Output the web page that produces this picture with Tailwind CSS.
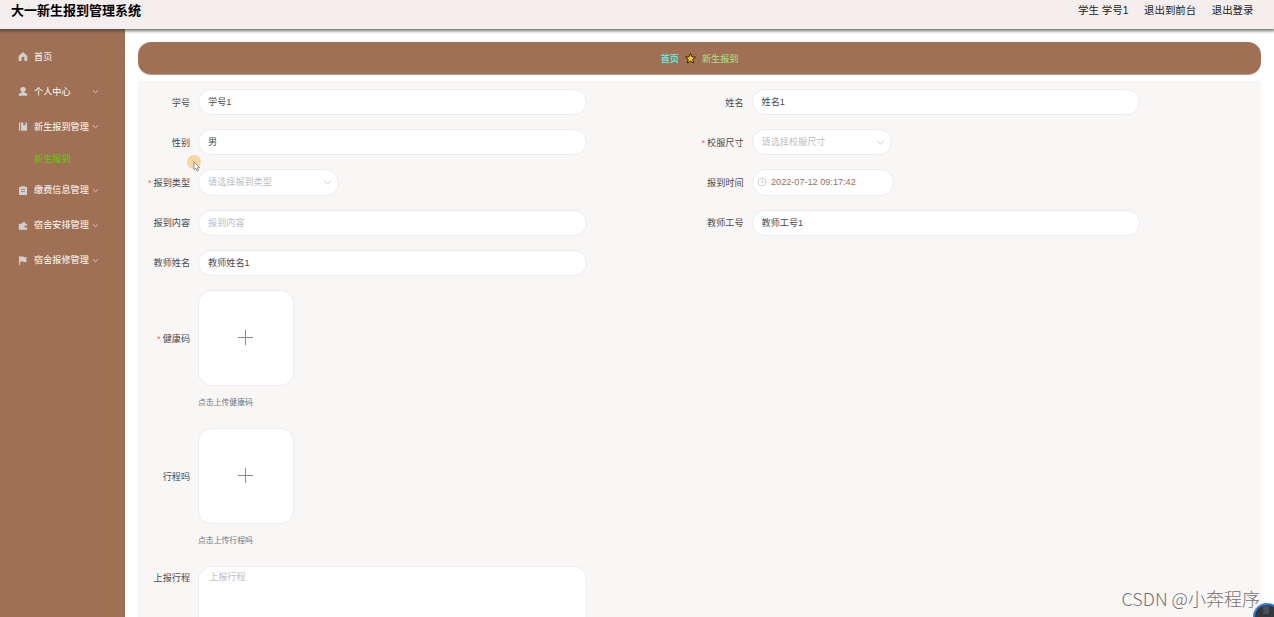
<!DOCTYPE html>
<html lang="zh">
<head>
<meta charset="utf-8">
<title>大一新生报到管理系统</title>
<script src="https://cdn.jsdelivr.net/npm/@tailwindcss/browser@4"></script>
</head>
<body class="relative flex h-[617px] w-[1274px] flex-col overflow-hidden bg-white font-['Liberation_Sans','Noto_Sans_CJK_SC',sans-serif] text-[9.15px] leading-none text-[#4a4a4e]">
<header class="relative z-10 flex h-[29px] shrink-0 items-start justify-between bg-[#f4eeee] pl-[11px] pr-[20.5px] pt-[3px] text-black shadow-[0_1px_3px_1px_rgba(50,55,45,0.7)]">
  <h1 class="text-[13px] font-bold leading-[15px]">大一新生报到管理系统</h1>
  <nav class="flex gap-[15.5px] text-[10.45px] leading-[15px] text-[#222]"><span>学生 学号1</span><span>退出到前台</span><span>退出登录</span></nav>
</header>
<div class="flex min-h-0 flex-1">
  <aside class="flex w-[125px] shrink-0 flex-col bg-[#a07054] pt-[10px] text-white">
    <a class="flex h-[35px] shrink-0 items-center pl-[18px]"><svg class="mr-[6px] size-[10px] fill-[#d0cfd3]" viewBox="0 0 10 10"><path d="M5 .1 9.3 3.9V8.9H6.4V6.1a1.4 1.4 0 0 0-2.8 0V8.9H.7V3.9Z"/></svg><span class="pt-[2px]">首页</span></a>
    <a class="flex h-[35px] shrink-0 items-center pl-[18px]"><svg class="mr-[6px] size-[10px] fill-[#d0cfd3]" viewBox="0 0 10 10"><path d="M5 .2a2.3 2.3 0 0 1 1.3 4.4V5.6L9.2 6.7V8.8H.8V6.7L3.7 5.6V4.6A2.3 2.3 0 0 1 5 .2Z"/></svg><span class="w-[58px] pt-[2px]">个人中心</span><svg class="size-[7px] fill-none stroke-[#e8dcd5]" viewBox="0 0 7 7"><path d="m.9 2.3 2.6 2.4 2.6-2.4" stroke-width=".8"/></svg></a>
    <a class="flex h-[35px] shrink-0 items-center pl-[18px]"><svg class="mr-[6px] size-[10px] fill-[#d0cfd3]" viewBox="0 0 10 10"><path d="M1 .4H2.2V8.8H1ZM3.1 .4H5.3V3.6L6.4 2.7 7.5 3.6V.4H9V8.8H3.1Z"/></svg><span class="w-[58px] pt-[2px]">新生报到管理</span><svg class="size-[7px] fill-none stroke-[#e8dcd5]" viewBox="0 0 7 7"><path d="m.9 2.3 2.6 2.4 2.6-2.4" stroke-width=".8"/></svg></a>
    <a class="flex h-[29px] shrink-0 items-center pl-[34px] pt-[2px] text-[#67c806]">新生报到</a>
    <a class="flex h-[35px] shrink-0 items-center pl-[18px]"><svg class="mr-[6px] size-[10px] fill-[#d0cfd3]" viewBox="0 0 10 10"><path fill-rule="evenodd" d="M1 .9H3V.2H7V.9H9V8.9H1ZM3 3.2V4H7V3.2ZM3 5.3V6.1H7V5.3Z"/></svg><span class="w-[58px] pt-px">缴费信息管理</span><svg class="size-[7px] fill-none stroke-[#e8dcd5]" viewBox="0 0 7 7"><path d="m.9 2.3 2.6 2.4 2.6-2.4" stroke-width=".8"/></svg></a>
    <a class="flex h-[35px] shrink-0 items-center pl-[18px]"><svg class="mr-[6px] size-[10px] fill-[#d0cfd3]" viewBox="0 0 10 10"><path d="M.8 2.9 3.8 2.4 6.3.4 7.4 2.8H9.2V4.6H7.4A.9.9 0 0 0 7.4 6.4H9.2V8.8H.8Z"/></svg><span class="w-[58px] pt-px">宿舍安排管理</span><svg class="size-[7px] fill-none stroke-[#e8dcd5]" viewBox="0 0 7 7"><path d="m.9 2.3 2.6 2.4 2.6-2.4" stroke-width=".8"/></svg></a>
    <a class="flex h-[35px] shrink-0 items-center pl-[18px]"><svg class="mr-[6px] size-[10px] fill-[#d0cfd3]" viewBox="0 0 10 10"><path d="M1 .2H2.1V.6H5.6V1.3H9.2L7.9 3.7 9.2 6H5.3V5.4H2.1V9.2H1Z"/></svg><span class="w-[58px] pt-px">宿舍报修管理</span><svg class="size-[7px] fill-none stroke-[#e8dcd5]" viewBox="0 0 7 7"><path d="m.9 2.3 2.6 2.4 2.6-2.4" stroke-width=".8"/></svg></a>
  </aside>
  <main class="flex min-w-0 flex-1 flex-col pl-[13px] pr-[13px] pt-[13px]">
    <div class="flex h-[33px] w-[1123px] shrink-0 items-center justify-center rounded-[13px] border-b border-[#b89a8e] bg-[#a07054]">
      <span class="pt-[3px] font-bold text-[#62e3dc]">首页</span>
      <svg class="mx-[6px] size-[11px] fill-[#ffc61a] stroke-[#201505]" viewBox="0 0 11 11"><path stroke-width=".9" stroke-linejoin="round" d="m5.5.6 1.4 3.1 3.5.4-2.6 2.3.8 3.5-3.1-1.7-3.1 1.7.8-3.5L.6 4.1l3.5-.4Z"/></svg>
      <span class="pt-[3px] text-[#a6e58b]">新生报到</span>
    </div>
    <form class="mt-[6px] grid min-h-0 flex-1 grid-cols-[553.5px_554px] content-start gap-y-[14px] bg-[#f9f6f6] pl-[7px] pt-[8px]">
      <div class="flex h-[26.2px] items-center"><label class="w-[45px] pt-[2px] text-right">学号</label><div class="ml-[8px] flex h-full w-[389px] items-center rounded-full border border-[#eeebed] bg-white pl-[9px] pt-px">学号1</div></div>
      <div class="flex h-[26.2px] items-center"><label class="w-[45px] pt-[2px] text-right">姓名</label><div class="ml-[8px] flex h-full w-[388.4px] items-center rounded-full border border-[#eeebed] bg-white pl-[9px] pt-px">姓名1</div></div>
      <div class="flex h-[26.2px] items-center"><label class="w-[45px] pt-[2px] text-right">性别</label><div class="ml-[8px] flex h-full w-[389px] items-center rounded-full border border-[#eeebed] bg-white pl-[9px] pt-px">男</div></div>
      <div class="flex h-[26.2px] items-center"><label class="flex w-[45px] justify-end whitespace-nowrap pt-[2px]"><span class="mr-[2px] text-[#f56c6c]">*</span>校服尺寸</label><div class="ml-[8px] flex h-full w-[140.4px] items-center justify-between rounded-full border border-[#eeebed] bg-white pl-[9px] pr-[6px] text-[#bcbec4]">请选择校服尺寸<svg class="size-[9px] fill-none stroke-[#b8bbc2]" viewBox="0 0 9 9"><path d="m1.2 2.8 3.3 3.4 3.3-3.4" stroke-width=".8"/></svg></div></div>
      <div class="flex h-[26.2px] items-center"><label class="flex w-[45px] justify-end whitespace-nowrap pt-[2px]"><span class="mr-[2px] text-[#f56c6c]">*</span>报到类型</label><div class="ml-[8px] flex h-full w-[141px] items-center justify-between rounded-full border border-[#eeebed] bg-white pl-[9px] pr-[6px] text-[#bcbec4]">请选择报到类型<svg class="size-[9px] fill-none stroke-[#b8bbc2]" viewBox="0 0 9 9"><path d="m1.2 2.8 3.3 3.4 3.3-3.4" stroke-width=".8"/></svg></div></div>
      <div class="flex h-[26.2px] items-center"><label class="flex w-[45px] justify-end whitespace-nowrap pt-[2px]">报到时间</label><div class="ml-[8px] flex h-full w-[142px] items-center rounded-full border border-[#eeebed] bg-white pl-[4.5px] text-[#98705c]"><svg class="mr-[4px] size-[10px] fill-none stroke-[#b8bbc2]" viewBox="0 0 10 10"><circle cx="5" cy="5" r="3.9" stroke-width=".7"/><path d="M5 2.5V5.2H7.3" stroke-width=".7"/></svg>2022-07-12 09:17:42</div></div>
      <div class="flex h-[26.2px] items-center"><label class="flex w-[45px] justify-end whitespace-nowrap pt-[2px]">报到内容</label><div class="ml-[8px] flex h-full w-[389px] items-center rounded-full border border-[#eeebed] bg-white pl-[9px] pt-px text-[#bcbec4]">报到内容</div></div>
      <div class="flex h-[26.2px] items-center"><label class="flex w-[45px] justify-end whitespace-nowrap pt-[2px]">教师工号</label><div class="ml-[8px] flex h-full w-[388.4px] items-center rounded-full border border-[#eeebed] bg-white pl-[9px] pt-[2px]">教师工号1</div></div>
      <div class="col-span-2 flex h-[26.2px] items-center"><label class="flex w-[45px] justify-end whitespace-nowrap pt-[2px]">教师姓名</label><div class="ml-[8px] flex h-full w-[389px] items-center rounded-full border border-[#eeebed] bg-white pl-[9px] pt-[2px]">教师姓名1</div></div>
      <div class="col-span-2 flex h-[124px]"><label class="flex h-[96px] w-[45px] items-center justify-end whitespace-nowrap pt-[3px]"><span class="mr-[2px] text-[#f56c6c]">*</span>健康码</label><div class="ml-[8px]"><div class="flex size-[96px] items-center justify-center rounded-[13px] border border-[#eeebed] bg-white pr-px"><svg class="size-[17px] stroke-[#85888f]" viewBox="0 0 17 17"><path d="M8.5 1V16M1 8.5H16" stroke-width="1"/></svg></div><p class="mt-[12px] text-[7.85px] leading-[10px] text-[#707580]">点击上传健康码</p></div></div>
      <div class="col-span-2 flex h-[124px]"><label class="flex h-[96px] w-[45px] items-center justify-end whitespace-nowrap pt-[3px]">行程吗</label><div class="ml-[8px]"><div class="flex size-[96px] items-center justify-center rounded-[13px] border border-[#eeebed] bg-white pr-px"><svg class="size-[17px] stroke-[#85888f]" viewBox="0 0 17 17"><path d="M8.5 1V16M1 8.5H16" stroke-width="1"/></svg></div><p class="mt-[12px] text-[7.85px] leading-[10px] text-[#707580]">点击上传行程吗</p></div></div>
      <div class="col-span-2 flex"><label class="flex h-[25px] w-[45px] items-center justify-end whitespace-nowrap">上报行程</label><div class="ml-[8px] h-[70px] w-[389px] rounded-[13px] border border-[#eeebed] bg-white pl-[10px] pt-[6px] text-[#bcbec4]">上报行程</div></div>
    </form>
  </main>
</div>
<div class="absolute left-[187px] top-[155px] size-[14px] rounded-full bg-[#f8d6a2]"></div>
<svg class="absolute left-[193px] top-[161px] h-[11px] w-[8px]" viewBox="0 0 8 11"><path d="M1 .8V8.8L2.8 7.2 4 10 5.3 9.4 4.1 6.8H6.7Z" fill="#fff" stroke="#77777f" stroke-width=".8"/></svg>
<div class="absolute left-[1121.5px] top-[587px] whitespace-nowrap font-['Noto_Sans_CJK_SC',sans-serif] text-[18px] font-light leading-[22px] text-[#757372]">CSDN @小奔程序</div>
<div class="absolute left-[1253px] top-[603px] size-[28px] overflow-hidden rounded-full border-2 border-[#2f7fd8] bg-[#35373f]"><div class="ml-[8px] h-[9px] w-[6px] bg-[#4d4f58]"></div></div>
</body>
</html>
